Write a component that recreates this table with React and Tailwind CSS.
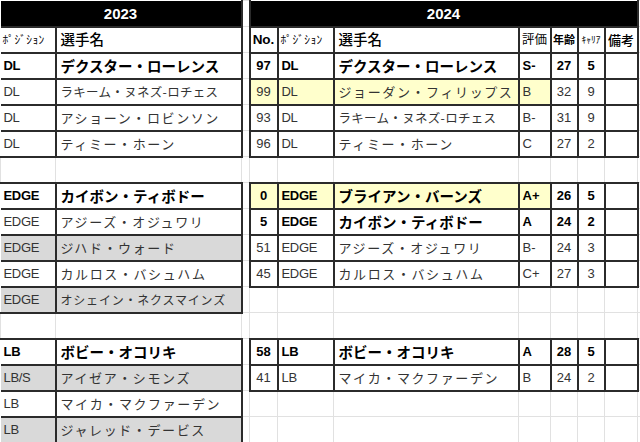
import React from 'react'

const jp = "font-['Noto_Sans_CJK_JP',sans-serif]"
const lat = "font-['Liberation_Sans','Noto_Sans_CJK_JP',sans-serif]"

// 2023 roster (rows after the header)
const left = [
  ['DL', 'デクスター・ローレンス', 'b'],
  ['DL', 'ラキーム・ヌネズ-ロチェス'],
  ['DL', 'アショーン・ロビンソン'],
  ['DL', 'ティミー・ホーン'],
  null,
  ['EDGE', 'カイボン・ティボドー', 'b'],
  ['EDGE', 'アジーズ・オジュワリ'],
  ['EDGE', 'ジハド・ウォード', 'g'],
  ['EDGE', 'カルロス・バシュハム'],
  ['EDGE', 'オシェイン・ネクスマインズ', 'gs'],
  null,
  ['LB', 'ボビー・オコリキ', 'b'],
  ['LB/S', 'アイゼア・シモンズ', 'g'],
  ['LB', 'マイカ・マクファーデン'],
  ['LB', 'ジャレッド・デービス', 'g'],
]

// 2024 roster
const right = [
  ['97', 'DL', 'デクスター・ローレンス', 'S-', '27', '5', 'b'],
  ['99', 'DL', 'ジョーダン・フィリップス', 'B', '32', '9', 'y'],
  ['93', 'DL', 'ラキーム・ヌネズ-ロチェス', 'B-', '31', '9'],
  ['96', 'DL', 'ティミー・ホーン', 'C', '27', '2'],
  null,
  ['0', 'EDGE', 'ブライアン・バーンズ', 'A+', '26', '5', 'by'],
  ['5', 'EDGE', 'カイボン・ティボドー', 'A', '24', '2', 'b'],
  ['51', 'EDGE', 'アジーズ・オジュワリ', 'B-', '24', '3'],
  ['45', 'EDGE', 'カルロス・バシュハム', 'C+', '27', '3'],
  null,
  null,
  ['58', 'LB', 'ボビー・オコリキ', 'A', '28', '5', 'b'],
  ['41', 'LB', 'マイカ・マクファーデン', 'B', '24', '2'],
  null,
  null,
]

const grid = 'border border-[#e1e1e1] p-0'
const dark = 'border-2 border-[#2b2b2b] p-0'
const Empty = ({ n = 1 }) =>
  Array.from({ length: n }).map((_, i) => <td key={i} className={grid}></td>)

// name text size: bold rows bigger, long names squeezed
const nameSize = (name, f) => {
  if (f.includes('b')) return 'text-[14.5px]'
  if (f.includes('s')) return 'text-[12px] tracking-[0.8px]'
  if (name.includes('-')) return 'text-[12.5px] tracking-[0.3px]'
  return 'text-[13px] tracking-[1.6px]'
}

const Name = ({ name, f, txt }) => (
  <div className={`${jp} ${txt} whitespace-nowrap overflow-hidden leading-[20px] pl-[4px] ${nameSize(name, f)}`}>
    {name}
  </div>
)

const LeftCells = ({ r }) => {
  if (!r) return <Empty n={2} />
  const [pos, name, f = ''] = r
  const bold = f.includes('b')
  const bg = f.includes('g') ? 'bg-[#d9d9d9]' : 'bg-white'
  const txt = bold ? 'font-bold text-black' : 'text-[#333]'
  return (
    <>
      <td className={`${dark} border-l-0 ${bg}`}>
        <div className={`${lat} ${txt} pl-[3px] text-[13px] tracking-[-0.3px]`}>{pos}</div>
      </td>
      <td className={`${dark} ${bg}`}>
        <Name name={name} f={f} txt={txt} />
      </td>
    </>
  )
}

const RightCells = ({ r }) => {
  if (!r) return <Empty n={7} />
  const [no, pos, name, grade, age, car, f = ''] = r
  const bold = f.includes('b')
  const yb = f.includes('y') ? 'bg-[#ffffcc]' : 'bg-white'
  const txt = bold ? 'font-bold text-black' : 'text-[#333]'
  return (
    <>
      <td className={`${dark} ${yb}`}>
        <div className={`${lat} ${txt} text-center text-[13px]`}>{no}</div>
      </td>
      <td className={`${dark} ${yb}`}>
        <div className={`${lat} ${txt} pl-[3px] text-[13px] tracking-[-0.3px]`}>{pos}</div>
      </td>
      <td className={`${dark} ${yb}`}>
        <Name name={name} f={f} txt={txt} />
      </td>
      <td className={`${dark} ${yb}`}>
        <div className={`${lat} ${txt} pl-[3px] text-[13px]`}>{grade}</div>
      </td>
      <td className={`${dark} bg-white`}>
        <div className={`${lat} ${txt} text-center text-[13px]`}>{age}</div>
      </td>
      <td className={`${dark} bg-white`}>
        <div className={`${lat} ${txt} text-center text-[13px]`}>{car}</div>
      </td>
      <td className={`${dark} bg-white`}></td>
    </>
  )
}

export default function App() {
  return (
    <div className="w-[640px] h-[442px] overflow-hidden bg-white">
      <table className="table-fixed border-collapse w-[640px] leading-none">
        <colgroup>
          <col className="w-[55px]" />
          <col className="w-[186px]" />
          <col className="w-[8px]" />
          <col className="w-[28px]" />
          <col className="w-[56px]" />
          <col className="w-[185px]" />
          <col className="w-[32px]" />
          <col className="w-[27px]" />
          <col className="w-[27px]" />
          <col className="w-[33px]" />
          <col className="w-[3px]" />
        </colgroup>
        <tbody>
          {/* year header */}
          <tr className="h-[26px]">
            <td colSpan={2} className={`${dark} border-l-0 border-t-0 bg-black`}>
              <div className={`${lat} text-white font-bold text-[15px] text-center`}>2023</div>
            </td>
            <Empty />
            <td colSpan={7} className={`${dark} border-t-0 bg-black`}>
              <div className={`${lat} text-white font-bold text-[15px] text-center`}>2024</div>
            </td>
            <Empty />
          </tr>
          {/* column titles */}
          <tr className="h-[26px]">
            <td className={`${dark} border-l-0`}>
              <div className={`${jp} text-black text-[11.5px] tracking-[0.4px] pl-[2px]`}>ﾎﾟｼﾞｼｮﾝ</div>
            </td>
            <td className={dark}>
              <div className={`${jp} text-black font-medium text-[14.5px] pl-[4px]`}>選手名</div>
            </td>
            <Empty />
            <td className={dark}>
              <div className={`${lat} text-black font-bold text-[13.5px] text-center`}>No.</div>
            </td>
            <td className={dark}>
              <div className={`${jp} text-black text-[11.5px] tracking-[0.4px] pl-[2px]`}>ﾎﾟｼﾞｼｮﾝ</div>
            </td>
            <td className={dark}>
              <div className={`${jp} text-black font-medium text-[14.5px] pl-[4px]`}>選手名</div>
            </td>
            <td className={dark}>
              <div className={`${jp} text-black text-[12.5px] text-center`}>評価</div>
            </td>
            <td className={dark}>
              <div className={`${jp} text-black font-bold text-[11px] text-center`}>年齢</div>
            </td>
            <td className={dark}>
              <div className={`${jp} text-black text-[9.5px] text-center`}>ｷｬﾘｱ</div>
            </td>
            <td className={dark}>
              <div className={`${jp} text-black font-medium text-[13px] text-center`}>備考</div>
            </td>
            <Empty />
          </tr>
          {left.map((l, i) => (
            <tr key={i} className="h-[26px]">
              <LeftCells r={l} />
              <Empty />
              <RightCells r={right[i]} />
              <Empty />
            </tr>
          ))}
        </tbody>
      </table>
    </div>
  )
}
